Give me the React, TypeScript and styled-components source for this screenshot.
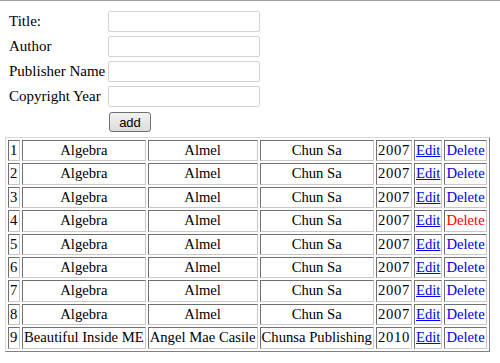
import React from "react";
import styled, { createGlobalStyle } from "styled-components";

const Global = createGlobalStyle`
  html, body { margin: 0; padding: 0; background: #fff; }
  body { font-family: "Liberation Serif", "Times New Roman", serif; font-size: 14.67px; color: #000; }
`;

const Page = styled.div`
  border-top: 1px solid #a0a0a0;
  padding: 10px 0 0 5px;
`;

const Form = styled.form`
  display: grid;
  grid-template-columns: 99px 152px;
  row-gap: 4px;
  padding-left: 4px;
  align-items: center;
  font-size: 15px;
`;

const Label = styled.label`
  line-height: 21px;
`;

const Input = styled.input`
  box-sizing: border-box;
  width: 152px;
  height: 21px;
  margin: 0;
  border: 1px solid #d4d4d4;
  border-radius: 2px;
  background: #fff;
`;

const Button = styled.button`
  grid-column: 2;
  justify-self: start;
  margin: 1px 0 0 1px;
  width: 42px;
  height: 20px;
  padding: 0;
  font-family: "Liberation Sans", Arial, sans-serif;
  font-size: 13px;
  color: #000;
  border: 1px solid #707070;
  border-radius: 3px;
  background: linear-gradient(#f2f2f2, #dcdcdc);
`;

const Table = styled.table`
  margin-top: 5px;
  border-collapse: separate;
  border-spacing: 2px;
  border: 1px solid;
  border-color: #d8d8d8 #808080 #808080 #d8d8d8;
  font-size: 14.67px;
`;

const Cell = styled.td<{ $center?: boolean; $num?: boolean }>`
  padding: 1px;
  border: 1px solid;
  border-color: #707070 #c8c8c8 #c8c8c8 #707070;
  text-align: ${(p) => (p.$center ? "center" : "left")};
  letter-spacing: ${(p) => (p.$num ? "0.7px" : "normal")};
  white-space: nowrap;
  line-height: 17.4px;
`;

const EditLink = styled.a`
  color: #0000ee;
  text-decoration: underline;
`;

const DeleteLink = styled.a<{ $hot?: boolean }>`
  color: ${(p) => (p.$hot ? "#ff0000" : "#0000ee")};
  text-decoration: none;
`;

type Row = { id: number; title: string; author: string; pub: string; year: string };

const rows: Row[] = [
  ...Array.from({ length: 8 }, (_, i) => ({
    id: i + 1,
    title: "Algebra",
    author: "Almel",
    pub: "Chun Sa",
    year: "2007",
  })),
  { id: 9, title: "Beautiful Inside ME", author: "Angel Mae Casile", pub: "Chunsa Publishing", year: "2010" },
];

export default function App() {
  return (
    <Page>
      <Global />
      <Form onSubmit={(e) => e.preventDefault()}>
        <Label>Title:</Label>
        <Input />
        <Label>Author</Label>
        <Input />
        <Label>Publisher Name</Label>
        <Input />
        <Label>Copyright Year</Label>
        <Input />
        <Button type="submit">add</Button>
      </Form>
      <Table>
        <tbody>
          {rows.map((r) => (
            <tr key={r.id}>
              <Cell $num>{r.id}</Cell>
              <Cell $center>{r.title}</Cell>
              <Cell $center>{r.author}</Cell>
              <Cell $center>{r.pub}</Cell>
              <Cell $num>{r.year}</Cell>
              <Cell>
                <EditLink href="#">Edit</EditLink>
              </Cell>
              <Cell>
                <DeleteLink href="#" $hot={r.id === 4}>
                  Delete
                </DeleteLink>
              </Cell>
            </tr>
          ))}
        </tbody>
      </Table>
    </Page>
  );
}
